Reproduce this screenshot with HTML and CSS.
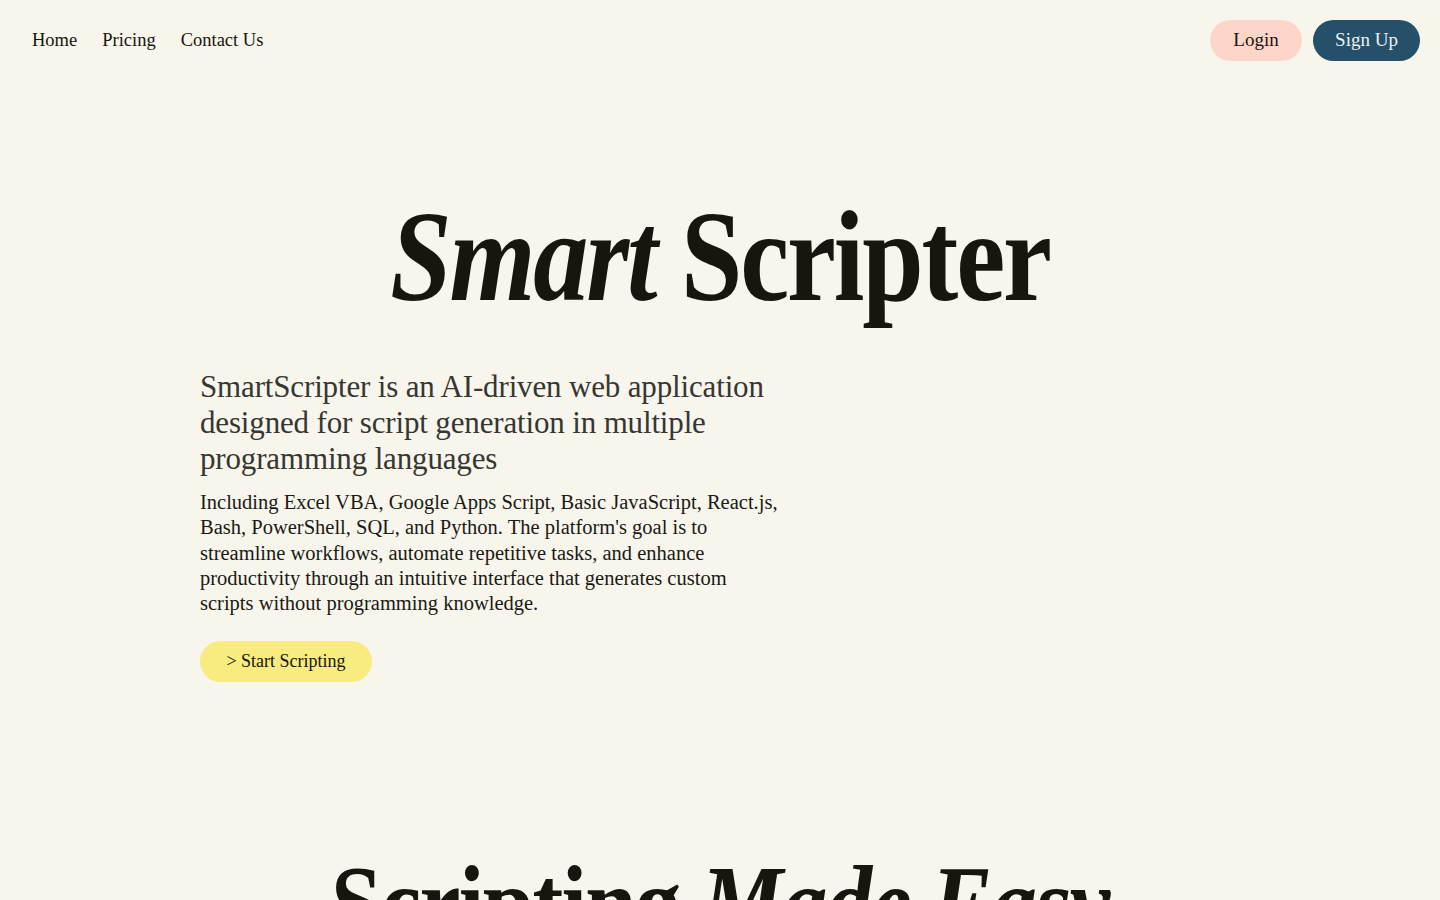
FILE: index.html
```html
<!DOCTYPE html>
<html lang="en">
<head>
<meta charset="utf-8">
<title>SmartScripter</title>
<link rel="stylesheet" href="styles.css">
</head>
<body>
<header class="topbar">
  <nav class="nav">
    <a href="#" class="nav-link">Home</a>
    <a href="#" class="nav-link">Pricing</a>
    <a href="#" class="nav-link">Contact Us</a>
  </nav>
  <div class="auth">
    <a href="#" class="btn btn-login">Login</a>
    <a href="#" class="btn btn-signup">Sign Up</a>
  </div>
</header>

<main>
  <section class="hero">
    <h1 class="title"><span class="squeeze"><em>Smart</em> Scripter</span></h1>
    <div class="intro">
      <h2 class="lead">SmartScripter is an AI-driven web application designed for script generation in multiple programming languages</h2>
      <p class="desc">Including Excel VBA, Google Apps Script, Basic JavaScript, React.js, Bash, PowerShell, SQL, and Python. The platform's goal is to streamline workflows, automate repetitive tasks, and enhance productivity through an intuitive interface that generates custom scripts without programming knowledge.</p>
      <a href="#" class="btn btn-start">&gt; Start Scripting</a>
    </div>
  </section>

  <section class="features">
    <h2 class="title title-sub"><span class="squeeze">Scripting <em>Made Easy</em></span></h2>
  </section>
</main>
</body>
</html>
```

FILE: styles.css
```css
* { box-sizing: border-box; }

html, body {
  margin: 0;
  padding: 0;
  background: #f8f5ed;
  color: #16160c;
  font-family: "Liberation Serif", "Times New Roman", serif;
}

a { text-decoration: none; color: inherit; }

.topbar {
  display: flex;
  justify-content: space-between;
  align-items: center;
  padding: 20px 20px 0 32px;
  height: 60px;
}

.nav {
  display: flex;
  gap: 25px;
}

.nav-link {
  font-size: 18.5px;
  color: #16160e;
}

.auth {
  display: flex;
  gap: 11px;
}

.btn {
  display: inline-flex;
  align-items: center;
  justify-content: center;
  height: 41px;
  border-radius: 21px;
  font-size: 19px;
}

.btn-login {
  width: 92px;
  background: #fdd6c9;
  color: #1c1410;
}

.btn-signup {
  width: 107px;
  background: #24506a;
  color: #eef2f0;
}

.hero {
  display: flex;
  flex-direction: column;
  align-items: center;
  padding-top: 121px;
}

.title {
  margin: 0;
  font-weight: 700;
  font-size: 130px;
  line-height: 150px;
  text-align: center;
  letter-spacing: -0.02em;
  color: #16160a;
}

.squeeze {
  display: inline-block;
  transform: scaleX(0.85);
}

.title em { font-style: italic; }

.title-sub {
  font-size: 109px;
  line-height: 130px;
}

.intro {
  align-self: flex-start;
  margin-left: 200px;
  width: 580px;
  margin-top: 38px;
}

.lead {
  margin: 0;
  font-weight: 400;
  font-size: 31px;
  line-height: 36px;
  color: #363632;
  letter-spacing: -0.005em;
}

.desc {
  margin: 13px 0 0;
  font-size: 20.5px;
  line-height: 25.3px;
  color: #1a1a14;
}

.btn-start {
  display: flex;
  margin-top: 25px;
  width: 172px;
  background: #f8ec80;
  color: #16160c;
  font-size: 18px;
}

.features {
  padding-top: 157px;
}
```
